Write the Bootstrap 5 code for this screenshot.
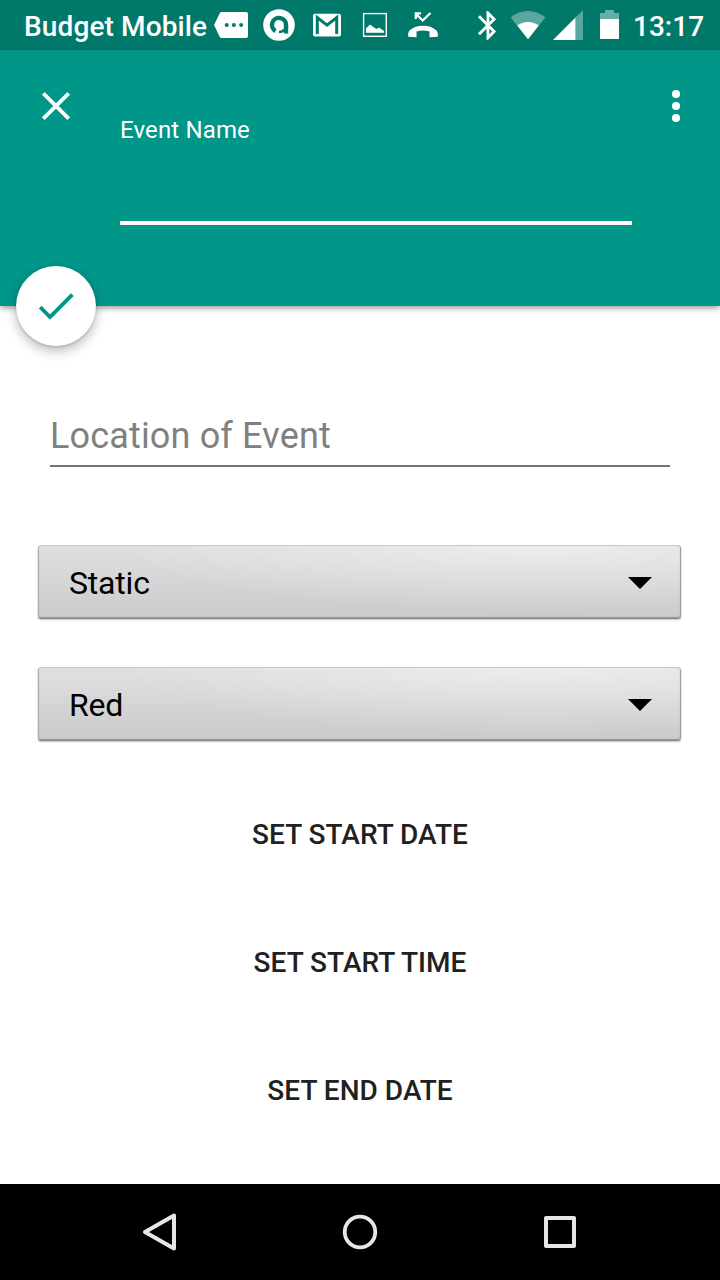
<!DOCTYPE html>
<html lang="en">
<head>
<meta charset="utf-8">
<meta name="viewport" content="width=device-width, initial-scale=1">
<title>New event</title>
<link href="https://cdn.jsdelivr.net/npm/bootstrap@5.3.0/dist/css/bootstrap.min.css" rel="stylesheet">
<style>
body { font-family: Roboto, "Liberation Sans", sans-serif; background: #fff; width: 720px; height: 1280px; overflow: hidden; }
svg { display: block; flex: none; }
.status { height: 50px; background: #00796b; font-size: 28px; font-weight: 500; line-height: 54px; padding-left: 24px; }
.carrier { width: 183px; white-space: nowrap; letter-spacing: .12px; }
.clock { width: 87px; margin-left: 10px; }
.appbar { height: 256px; background: #009688; box-shadow: 0 2px 6px rgba(0,0,0,.4); padding: 32px 20px 0 32px; }
.field-name { width: 512px; height: 143px; margin-left: 40px; border-bottom: 4px solid #fff; font-size: 24px; line-height: 28px; padding-top: 34px; letter-spacing: .14px; }
.fab { width: 80px; height: 80px; left: 16px; bottom: -40px; box-shadow: 0 5px 12px rgba(0,0,0,.27), 0 1px 3px rgba(0,0,0,.15); }
.location { margin: 98px 50px 0; height: 63px; border-bottom: 2px solid #757575; color: #808080; font-size: 36px; line-height: 42px; padding-top: 11px; letter-spacing: .16px; }
.spinner { width: 643px; height: 73px; margin-left: 38px; padding: 2px 28px 0 31px; font-size: 32px; color: #000; border-radius: 3px; border: 0; letter-spacing: -.2px;
  background: radial-gradient(ellipse 420px 66px at 78% 0, rgba(255,255,255,.42), rgba(255,255,255,0)), linear-gradient(#e0e0e0, #cecece 85%, #cbcbcb);
  box-shadow: inset 0 1px 0 #c9c9c9, inset 0 -1px 1px #999, inset 1px 0 1px #aaa, inset -1px 0 1px #999, 0 1px 1px #808080, 0 2px 2px rgba(0,0,0,.2); }
.actions { margin-top: 47px; row-gap: 32px; }
.action { height: 96px; font-size: 28px; font-weight: 500; color: #212121; border: 0; border-radius: 0; letter-spacing: .03px; }
.sysnav { height: 96px; padding: 0 136px; }
</style>
</head>
<body class="d-flex flex-column">
<div class="status d-flex text-white">
  <div class="carrier">Budget Mobile</div>
  <svg width="240" height="50" viewBox="207 0 240 50" fill="#fff">
    <path d="M221.500 12H246q2 0 2 2V36q0 2-2 2H221.500q-1 0-1.700-1L214.300 25.500q-.3-.5 0-1L219.800 13q.7-1 1.700-1z"/>
    <g fill="#00796b"><circle cx="226.700" cy="25" r="2"/><circle cx="233.900" cy="25" r="2"/><circle cx="241.100" cy="25" r="2"/></g>
    <circle cx="279" cy="25" r="15.800"/>
    <path d="M275.500 31A7 7 0 1 1 286 25V33.500" fill="none" stroke="#00796b" stroke-width="4.400"/>
    <path d="M286 25.500A6.700 6.700 0 0 1 279 32" fill="none" stroke="#00796b" stroke-width="2.500"/>
    <rect x="313" y="13.700" width="28" height="22.800" rx="2"/>
    <path d="M317.300 34V17.500L327 25.200L336.700 17.500V34" fill="none" stroke="#00796b" stroke-width="3"/>
    <rect x="363.600" y="13.600" width="22.700" height="22.700" fill="none" stroke="#fff" stroke-width="1.400"/>
    <path d="M366 32.700V28.500L370 24.500L374 27.500L376.500 29L379 27.500L384 31V32.700z"/>
    <path d="M408.300 36.700Q407.500 32.500 410 30Q415 25.700 423 25.700T436 30Q438.500 32.500 437.700 36.700L429.500 37.300V31.500Q423 29.300 416.500 31.500V37.300z"/>
    <path d="M415.500 13.500L422.700 20.500L430.500 13M415.800 19V13.300H421" fill="none" stroke="#fff" stroke-width="2.300"/>
  </svg>
  <svg class="ms-auto" width="153" height="50" viewBox="470 0 153 50" fill="#fff">
    <path transform="translate(470.800 8.200) scale(1.430)" d="M17.710 7.710L12 2h-1v7.590L6.410 5 5 6.410 10.590 12 5 17.590 6.410 19 11 14.410V22h1l5.710-5.710-4.300-4.290 4.300-4.290zM13 5.830l1.880 1.880L13 9.590V5.830zm1.880 10.460L13 18.170v-3.760l1.880 1.880z"/>
    <path opacity=".35" d="M528 39.300L510.700 17.500Q518 11 528 11T545.300 17.500z"/>
    <path d="M528 39.300L517.300 25.500Q522 22 528 22T538.700 25.500z"/>
    <path opacity=".35" d="M583 10V40H575.500V17.500z"/><path d="M553 40L575.500 17.500V40z"/>
    <path opacity=".4" d="M605 10H614V13H619V19H600V13H605z"/><path d="M600 19H619V39H600z"/>
  </svg>
  <div class="clock">13:17</div>
</div>
<header class="appbar position-relative d-flex align-items-start text-white">
  <svg width="48" height="48" viewBox="0 0 48 48" fill="none" stroke="#fff" stroke-width="3.800"><path d="M11.300 11.300L36.700 36.700M36.700 11.300L11.300 36.700"/></svg>
  <label class="field-name">Event Name</label>
  <svg class="ms-auto" width="48" height="48" viewBox="0 0 48 48" fill="#fff"><circle cx="24" cy="12" r="4"/><circle cx="24" cy="24" r="4"/><circle cx="24" cy="36" r="4"/></svg>
  <div class="fab position-absolute rounded-circle bg-white d-flex align-items-center justify-content-center">
    <svg width="48" height="48" viewBox="0 0 48 48" fill="none" stroke="#009688" stroke-width="3.800"><path d="M8.200 25.200L18 35L40.300 12.700"/></svg>
  </div>
</header>
<main class="flex-grow-1 d-flex flex-column">
  <div class="location">Location of Event</div>
  <div class="spinner d-flex align-items-center justify-content-between" style="margin-top:78px"><span>Static</span><svg width="26" height="14" viewBox="0 0 26 14"><path d="M1 1H25L13 13z"/></svg></div>
  <div class="spinner d-flex align-items-center justify-content-between" style="margin-top:49px"><span>Red</span><svg width="26" height="14" viewBox="0 0 26 14"><path d="M1 1H25L13 13z"/></svg></div>
  <div class="actions d-grid">
    <button class="btn action">SET START DATE</button>
    <button class="btn action">SET START TIME</button>
    <button class="btn action">SET END DATE</button>
  </div>
</main>
<footer class="sysnav bg-black d-flex align-items-center justify-content-between">
  <svg width="48" height="48" viewBox="0 0 48 48" fill="none" stroke="#e6e6e6" stroke-width="4" stroke-linejoin="round"><path d="M9 24L38 7.500V40.500z"/></svg>
  <svg width="48" height="48" viewBox="0 0 48 48" fill="none" stroke="#e6e6e6" stroke-width="3.800"><circle cx="24" cy="24" r="15.300"/></svg>
  <svg width="48" height="48" viewBox="0 0 48 48" fill="none" stroke="#e6e6e6" stroke-width="4" stroke-linejoin="round"><path d="M10 10H38V38H10z"/></svg>
</footer>
<script src="https://cdn.jsdelivr.net/npm/bootstrap@5.3.0/dist/js/bootstrap.bundle.min.js"></script>
</body>
</html>
